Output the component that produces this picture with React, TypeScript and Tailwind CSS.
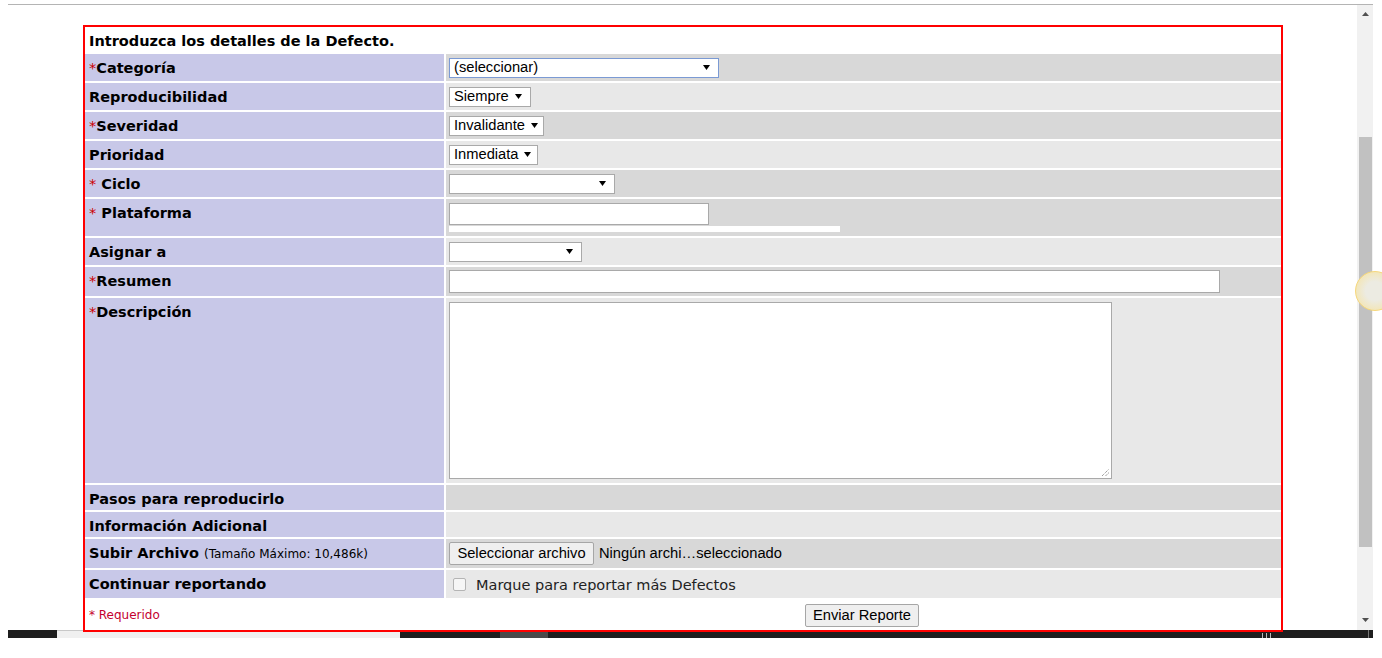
import type { FC, ReactNode } from 'react';

const Arrow: FC = () => (
  <svg width="7" height="5" viewBox="0 0 7 5" className="shrink-0">
    <polygon points="0,0 7,0 3.5,5" fill="#000" />
  </svg>
);

interface SelectProps {
  text?: string;
  className: string;
}

const FakeSelect: FC<SelectProps> = ({ text = '', className }) => (
  <div
    className={`flex h-[20px] items-center justify-between bg-white pl-[4px] pr-[8px] font-['Liberation_Sans',Arial,sans-serif] text-[14.7px] leading-none text-black ${className}`}
  >
    <span>{text}</span>
    <Arrow />
  </div>
);

const Req: FC = () => <span className="font-normal text-[#cc0000]">*</span>;

interface Row {
  label: ReactNode;
  rowClass: string;
  tone: string;
  content?: ReactNode;
}

const rows: Row[] = [
  {
    label: (
      <>
        <Req />
        Categoría
      </>
    ),
    rowClass: 'h-[27px]',
    tone: 'bg-[#d8d8d8]',
    content: (
      <FakeSelect
        text="(seleccionar)"
        className="w-[270px] border border-[#7b9ad4]"
      />
    ),
  },
  {
    label: 'Reproducibilidad',
    rowClass: 'h-[27px]',
    tone: 'bg-[#e8e8e8]',
    content: (
      <FakeSelect text="Siempre" className="w-[82px] border border-[#a9a9a9]" />
    ),
  },
  {
    label: (
      <>
        <Req />
        Severidad
      </>
    ),
    rowClass: 'h-[27px]',
    tone: 'bg-[#d8d8d8]',
    content: (
      <FakeSelect
        text="Invalidante"
        className="w-[95px] border border-[#a9a9a9] !pr-[5px]"
      />
    ),
  },
  {
    label: 'Prioridad',
    rowClass: 'h-[27px]',
    tone: 'bg-[#e8e8e8]',
    content: (
      <FakeSelect
        text="Inmediata"
        className="w-[89px] border border-[#a9a9a9] !pr-[6px]"
      />
    ),
  },
  {
    label: (
      <>
        <Req /> Ciclo
      </>
    ),
    rowClass: 'h-[27px]',
    tone: 'bg-[#d8d8d8]',
    content: <FakeSelect className="w-[166px] border border-[#a9a9a9]" />,
  },
  {
    label: (
      <>
        <Req /> Plataforma
      </>
    ),
    rowClass: 'h-[37px]',
    tone: 'bg-[#d8d8d8]',
    content: (
      <div className="flex flex-col">
        <div className="h-[22px] w-[260px] border border-[#a9a9a9] bg-white" />
        <div className="mt-[1px] h-[6px] w-[391px] bg-white" />
      </div>
    ),
  },
  {
    label: 'Asignar a',
    rowClass: 'h-[27px]',
    tone: 'bg-[#e8e8e8]',
    content: <FakeSelect className="w-[133px] border border-[#a9a9a9]" />,
  },
  {
    label: (
      <>
        <Req />
        Resumen
      </>
    ),
    rowClass: 'h-[29px]',
    tone: 'bg-[#d8d8d8]',
    content: (
      <div className="h-[23px] w-[771px] border border-[#a9a9a9] bg-white" />
    ),
  },
  {
    label: (
      <>
        <Req />
        Descripción
      </>
    ),
    rowClass: 'h-[185px]',
    tone: 'bg-[#e8e8e8]',
    content: (
      <div className="relative h-[177px] w-[663px] border border-[#a9a9a9] bg-white">
        <svg
          width="9"
          height="9"
          viewBox="0 0 9 9"
          className="absolute bottom-[1px] right-[1px]"
        >
          <path d="M1 8 L8 1 M4.5 8 L8 4.5" stroke="#777" strokeWidth="1" strokeDasharray="1 1" />
        </svg>
      </div>
    ),
  },
  {
    label: 'Pasos para reproducirlo',
    rowClass: 'h-[25px]',
    tone: 'bg-[#d8d8d8]',
  },
  {
    label: 'Información Adicional',
    rowClass: 'h-[25px]',
    tone: 'bg-[#e8e8e8]',
  },
  {
    label: (
      <>
        Subir Archivo{' '}
        <span className="text-[12px] font-normal">(Tamaño Máximo: 10,486k)</span>
      </>
    ),
    rowClass: 'h-[29px]',
    tone: 'bg-[#d8d8d8]',
    content: (
      <div className="flex items-center font-['Liberation_Sans',Arial,sans-serif] text-[14.7px] text-black">
        <div className="flex h-[23px] w-[145px] items-center justify-center rounded-[2px] border border-[#a6a6a6] bg-[#efefef]">
          Seleccionar archivo
        </div>
        <span className="ml-[5px]">Ningún archi…seleccionado</span>
      </div>
    ),
  },
  {
    label: 'Continuar reportando',
    rowClass: 'h-[28px]',
    tone: 'bg-[#e8e8e8]',
    content: (
      <div className="flex items-center pl-[4px]">
        <div className="h-[13px] w-[13px] rounded-[2px] border border-[#b4b4b4] bg-[#f6f6f6]" />
        <span className="ml-[10px] pt-[3px] text-[14.5px] text-[#222]">
          Marque para reportar más Defectos
        </span>
      </div>
    ),
  },
];

const App: FC = () => {
  return (
    <div className="relative h-[658px] w-full overflow-hidden bg-white font-['DejaVu_Sans',Verdana,sans-serif]">
      <div className="ml-[8px] mt-[4px] flex w-[1365px] border-t border-[#b4b4b4]">
        <div className="w-[1349px]">
          <div className="relative z-10 ml-[75px] mt-[20px] w-[1200px] border-2 border-[#ff0000] bg-white">
            <div className="grid grid-cols-[359px_835px] gap-[2px]">
              <div className="col-span-2 flex h-[25px] items-center pl-[4px] pt-[4px] text-[14.5px] font-bold text-black">
                Introduzca los detalles de la Defecto.
              </div>
              {rows.map((row, i) => (
                <div key={i} className="contents">
                  <div
                    className={`bg-[#c8c8e8] pl-[4px] pt-[5px] text-[14.5px] font-bold leading-[18px] text-black ${row.rowClass}`}
                  >
                    {row.label}
                  </div>
                  <div className={`flex items-center pl-[3px] ${row.tone}`}>
                    {row.content}
                  </div>
                </div>
              ))}
              <div className="flex h-[30px] items-center pl-[4px] text-[12px] text-[#c4002f]">
                * Requerido
              </div>
              <div className="flex items-center justify-center pr-[3px]">
                <div className="flex h-[23px] w-[114px] items-center justify-center rounded-[2px] border border-[#a6a6a6] bg-[#efefef] font-['Liberation_Sans',Arial,sans-serif] text-[14.7px] text-black">
                  Enviar Reporte
                </div>
              </div>
            </div>
          </div>
        </div>
        {/* scrollbar */}
        <div className="flex h-[625px] w-[16px] flex-col bg-[#f1f1f1]">
          <div className="flex h-[17px] items-center justify-center pt-[1px]">
            <svg width="7" height="4" viewBox="0 0 7 4">
              <polygon points="0,4 7,4 3.5,0" fill="#505050" />
            </svg>
          </div>
          <div className="ml-[2px] mt-[115px] h-[410px] w-[13px] bg-[#c1c1c1]" />
          <div className="flex-1" />
          <div className="flex h-[17px] items-center justify-center pb-[4px]">
            <svg width="7" height="4" viewBox="0 0 7 4">
              <polygon points="0,0 7,0 3.5,4" fill="#505050" />
            </svg>
          </div>
        </div>
      </div>

      {/* bottom bar overlay */}
      <div className="absolute left-[8px] top-[630px] flex h-[8px] w-[1365px]">
        <div className="w-[49px] bg-[#1e1e1e]" />
        <div className="w-[343px] border-t border-[#c8c8c8] bg-[#f0f0f0]" />
        <div className="w-[100px] bg-[#1e1e1e]" />
        <div className="w-[48px] bg-[#4a4a4a]" />
        <div className="relative flex-1 bg-[#1e1e1e]">
          <div className="absolute left-[714px] top-[3px] flex gap-[3px]">
            <div className="h-[5px] w-[1px] bg-[#bbb]" />
            <div className="h-[5px] w-[1px] bg-[#bbb]" />
            <div className="h-[5px] w-[1px] bg-[#bbb]" />
          </div>
          <div className="absolute right-[4px] top-0 h-[8px] w-[1px] bg-[#777]" />
        </div>
      </div>

      {/* yellow cursor highlight */}
      <div className="absolute left-[1355px] top-[271px] h-[40px] w-[40px] rounded-full border border-[#f6d77a] bg-[radial-gradient(circle,#ecebe2_35%,#f7e29a_100%)]" />
    </div>
  );
};

export default App;
